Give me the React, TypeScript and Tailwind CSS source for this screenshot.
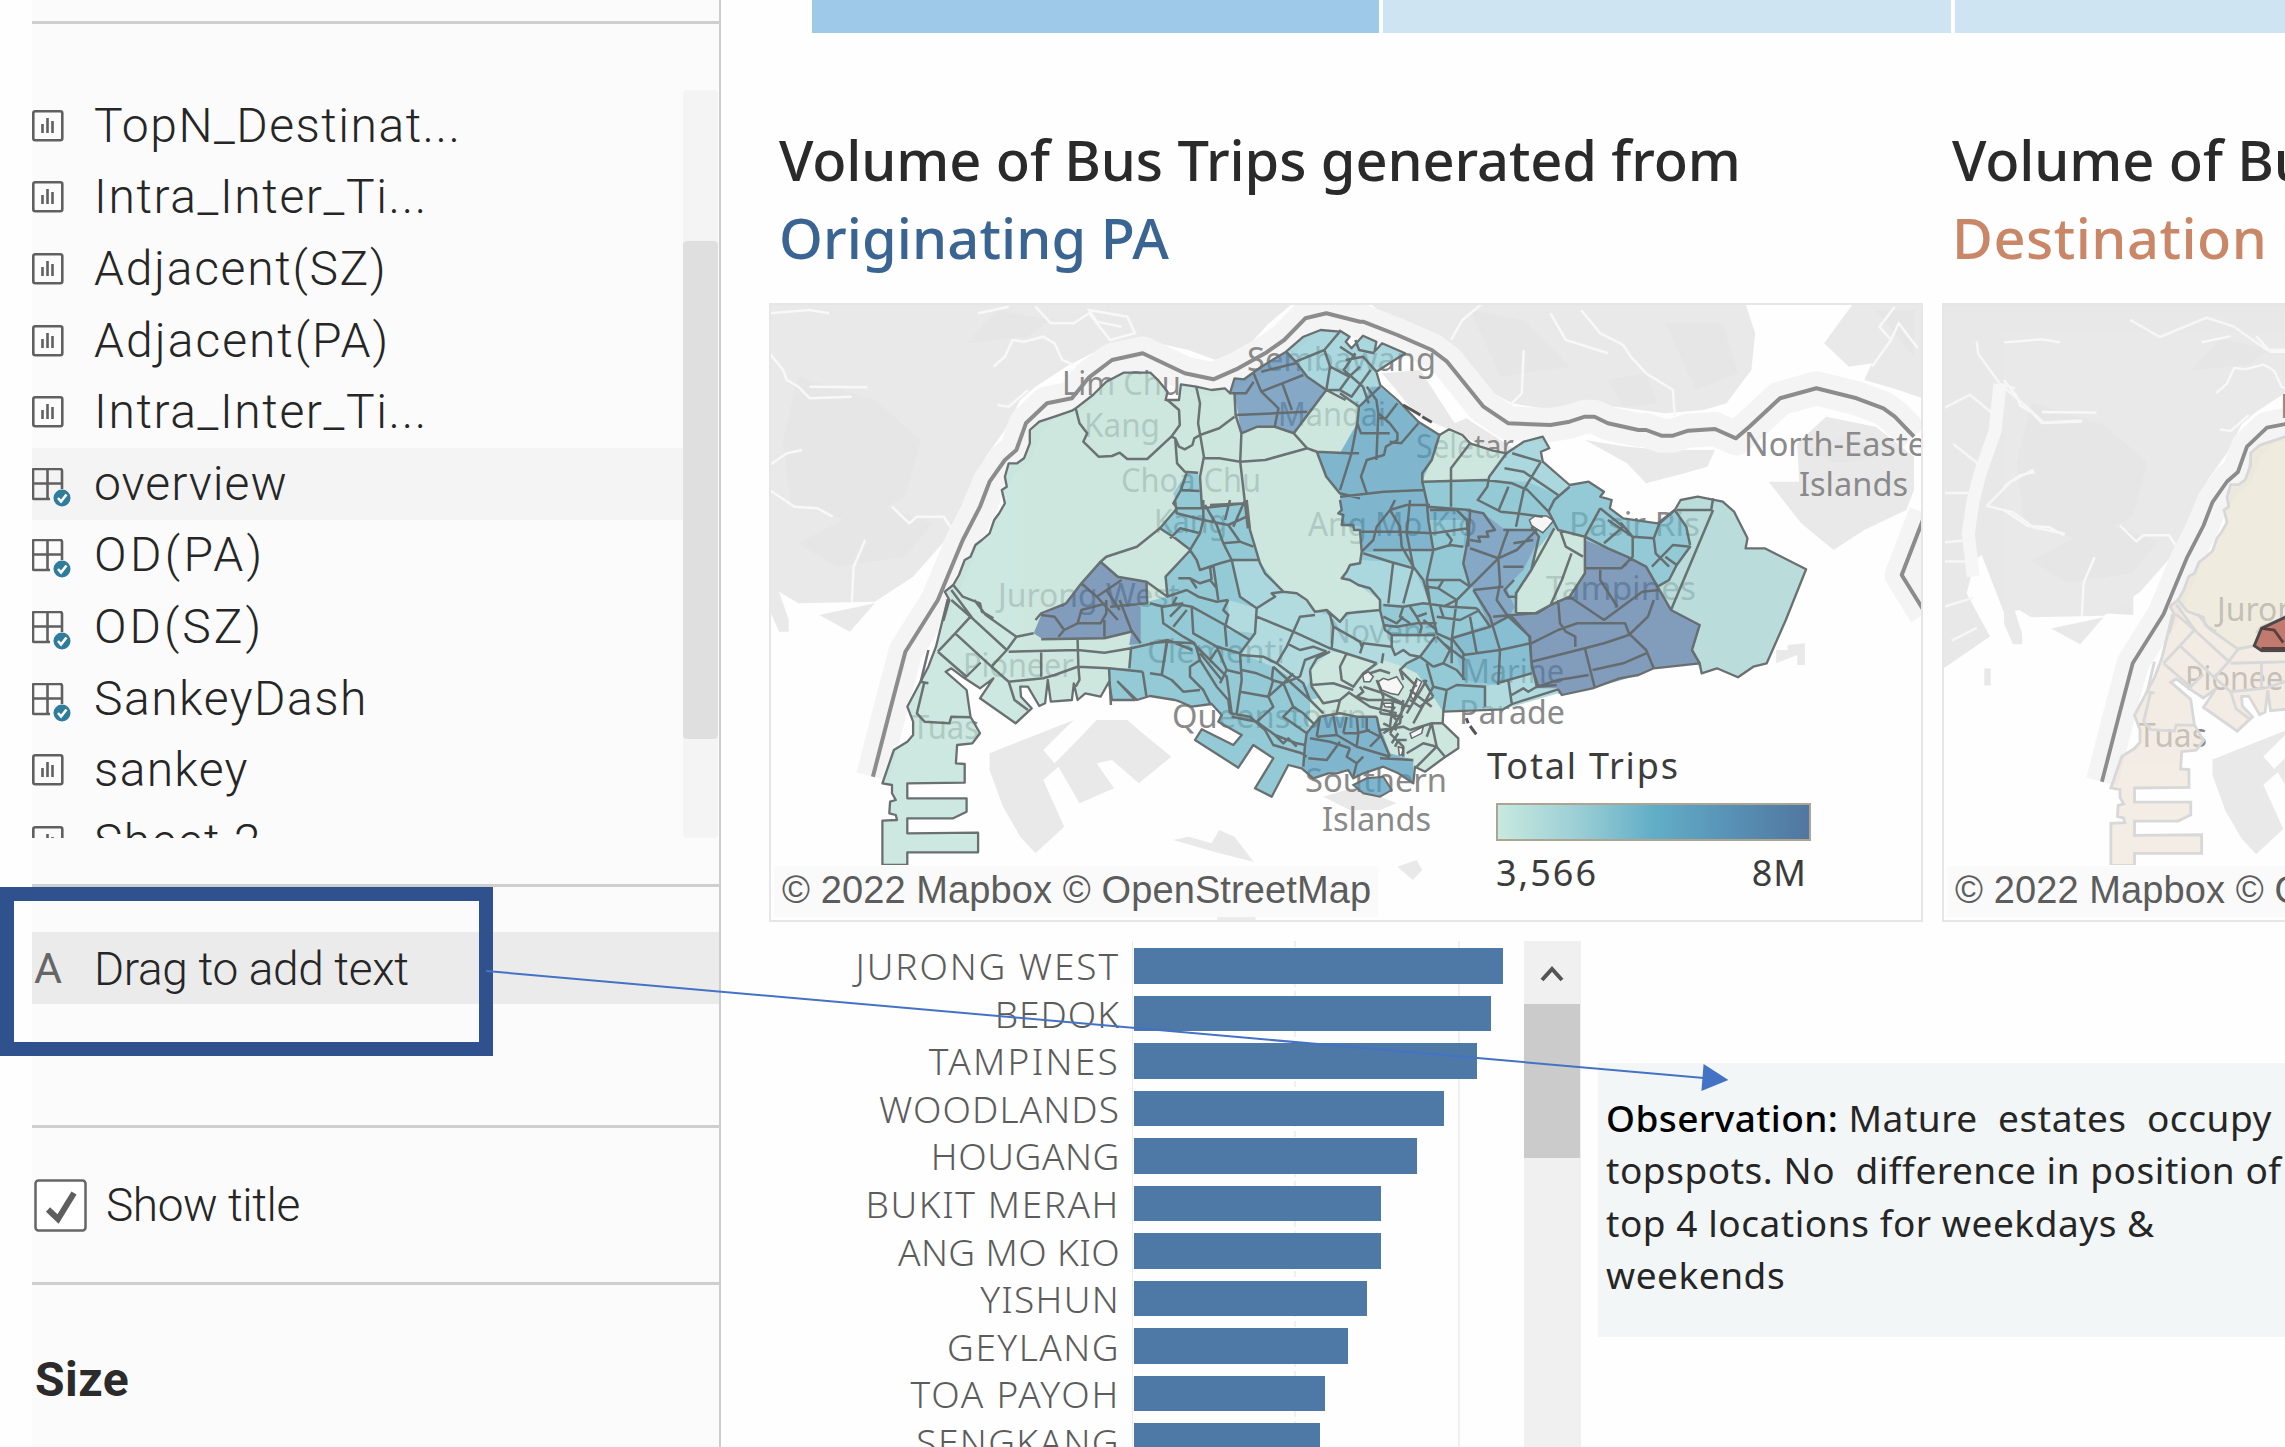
import React from "react";

/* ---------- map geometry ---------- */

type Frame = [number, number, number, number];

// Survey sheets: origin and scale of each set of coordinates.
const SHEETS: Record<string, Frame> = {
  W: [760, 290, 0.38265, 0.33333],
  E: [1340, 290, 0.38265, 0.33333],
  S: [760, 600, 0.38265, 0.33333],
  T: [1340, 600, 0.38265, 0.33333],
  C: [1150, 500, 0.33333, 0.33333],
  M: [1900, 260, 0.33333, 0.42772],
};

function path(src: string, close = false): string {
  return src
    .split(";")
    .map((part) => {
      let d = "";
      part
        .trim()
        .split(/\s+/)
        .forEach((tok) => {
          if (SHEETS[tok]) {
            frame = SHEETS[tok];
            return;
          }
          if (!tok) return;
          const [u, v] = tok.split(",").map(Number);
          d += (d ? "L" : "M") + (frame[0] + u * frame[2]).toFixed(1) + " " + (frame[1] + v * frame[3]).toFixed(1);
        });
      return d + (close && d ? "Z" : "");
    })
    .join("");
}
let frame: Frame = SHEETS.W;

const ISLAND =
  "W 480,990 495,930 483,905 505,885 520,855 535,810 550,800 563,765 580,750 600,730 612,690 625,670 640,640 632,600 645,590 640,560 650,520 672,520 690,505 705,460 705,420 730,395 770,380 815,362 825,355 870,315 905,275 950,248 1020,248 1040,270 1065,305 1060,330 1095,330 1100,283 1140,290 1180,300 1215,295 1228,310 1240,265 1265,268 1310,230 1375,185 1420,140 1465,120 1515,125 E 0,122 25,140 15,155 30,175 60,137 95,155 90,185 110,160 170,190 95,245 105,285 150,330 205,395 260,435 285,418 320,435 340,460 400,482 435,490 480,455 530,440 547,475 525,485 530,515 600,585 650,575 690,605 680,620 710,630 705,655 740,685 830,700 875,660 890,630 935,620 1000,635 1030,665 1065,745 1060,775 1110,775 1218,838 1165,990 T 1115,190 1080,200 1040,232 985,205 945,220 940,190 820,205 780,225 730,235 660,265 580,285 570,268 450,312 C 1060,628 880,635 878,670 925,715 925,745 880,775 825,815 795,800 790,850 745,820 700,800 640,820 610,835 595,810 560,820 535,820 490,835 455,805 415,795 365,890 315,865 370,775 310,735 265,803 135,720 155,688 250,735 275,705 205,665 215,645 185,612 125,620 90,605 75,600 0,588 S 985,300 935,245 980,300 920,300 912,245 890,290 850,280 830,300 820,250 815,300 760,305 752,240 745,310 730,318 700,260 680,260 682,290 710,325 668,370 600,315 575,295 610,235 575,265 535,235 575,190 535,235 500,205 485,215 540,270 550,350 575,400 555,430 515,435 512,490 535,492 535,548 385,550 385,595 540,595 540,635 505,655 385,655 385,700 570,698 570,757 385,757 385,795 320,795 320,662 358,660 355,645 338,640 340,605 355,600 345,580 345,555 320,550 350,450 385,425 400,405 400,365 385,320 440,200 460,140 490,0";

const MINT = "#bce0d5";
const LIGHT = "#8fcad4";
const MID = "#70b7c9";
const BLUE = "#559dbd";
const STEEL = "#5a8bb3";
const DARK = "#577ba6";

const REGIONS: [string, string][] = [
  // central, south and east
  [MID, "W 1115,548 1145,548 1155,655 1265,640 1275,715 C 300,90 330,190 400,275 440,280 495,335 530,330 570,365 590,340 690,330 690,300 625,255 575,235 600,195 630,190 635,155 630,90 575,75 570,0 E 0,490 45,400 50,350 105,290 150,330 205,395 260,435 240,510 215,575 380,570 430,500 480,455 530,440 547,475 525,485 530,515 600,585 650,575 690,605 680,620 710,630 705,655 740,685 830,700 875,660 905,710 915,770 860,870 830,890 865,960 T 940,75 915,150 940,190 820,205 580,285 C 1165,560 1005,560 1005,625 880,635 800,520 640,560 480,600 480,640 460,800 455,805 415,795 365,890 315,865 370,775 310,735 265,803 135,720 155,688 250,735 275,705 205,665 215,645 185,612 125,620 75,600 0,588 S 985,300 935,245 980,300 920,300 912,205 965,205 970,140 W 975,945 1065,920 1060,860 1125,780 1045,715 1090,650 1080,610"],
  ["#a3d2d1", "E 880,655 890,630 935,620 1000,635 1030,665 1065,745 1060,775 1110,775 1218,838 1165,990 T 1115,190 1080,200 1040,232 985,205 945,220 915,150 940,75 865,30 E 865,960 830,890 860,870 915,770 905,710"],
  [LIGHT, "W 1375,185 1420,140 1465,120 1515,125 E 0,122 25,140 15,155 30,175 60,137 95,155 90,185 110,160 170,190 95,245 105,290 50,350 0,310 W 1480,300 1430,260 1400,215"],
  ["#98d0d6", "C 235,300 320,325 375,290 400,275 440,280 495,335 540,345 570,365 620,330 690,330 705,390 725,410 850,410 810,470 750,510 690,490 590,460 540,455 500,500 470,560 370,500 270,460 315,400 235,390"],
  [LIGHT, "C 635,180 720,185 790,200 840,310 700,315 690,300 625,255 575,235 600,200"],
  [LIGHT, "C 250,185 325,180 400,275 375,290 320,325 270,290"],
  [LIGHT, "E 380,570 435,490 480,455 530,440 547,475 525,485 530,515 600,585 570,615 490,575"],
  [MINT, "C 540,455 590,460 680,490 650,520 610,580 560,610 520,610 485,560 480,510"],
  [MINT, "C 560,640 600,580 650,520 700,480 760,500 800,520 850,590 880,640 878,670 925,715 925,745 825,815 745,760 720,760 690,700 670,640"],
  ["#98d0d6", "C 1005,560 1075,540 1145,520 1165,560 1220,555 1225,580 1060,628 1005,625"],
  [BLUE, "E 0,490 45,400 55,350 80,290 105,290 205,395 260,435 240,510 215,560 230,650 340,660 335,770 220,780 60,790 55,710 10,700 W 1525,710 1515,610 1480,560 1455,485 1540,490"],
  [MID, "C 635,155 760,155 850,150 830,240 845,150 835,60 950,60 940,140 935,240 830,240 790,200"],
  [BLUE, "C 470,700 510,650 680,650 720,760 790,780 790,850 745,820 700,800 610,835 595,810 535,820 490,835 455,805"],
  [BLUE, "C 610,855 650,835 700,830 725,870 690,890 640,880"],
  ["#5fa8c2", "C 905,410 1075,350 1140,410 1140,520 1040,555 940,540"],
  [STEEL, "W 1375,185 1400,215 1430,260 1480,300 1395,430 1345,410 1300,410 1258,430 1240,310 1228,310 1240,265 1265,268 1310,230"],
  [STEEL, "C 950,30 1000,40 1060,85 1160,90 1165,120 1120,210 1070,260 1080,290 1095,320 1075,350 1020,380 970,270 940,190 960,110"],
  [DARK, "W 890,815 935,860 1010,875 1015,940 975,940 S 995,20 995,130 965,135 970,95 900,115 735,115 715,100 735,45 800,10"],
  [DARK, "E 640,750 750,800 800,830 830,890 865,960 T 940,75 920,150 940,190 820,205 780,225 660,265 580,285 570,265 515,265 500,180 495,110 445,45 510,40 E 550,945 600,920 640,850"],
  [MINT, "E 560,715 640,740 640,850 600,920 550,945 515,970 460,970 465,910 500,840 515,780"],
  [MINT, "E 260,435 285,418 340,460 435,490 380,570 215,575 240,510"],
];

const HOLES =
  "E 495,690 510,678 540,678 558,692 545,710 530,728 512,715 500,705 ; C 638,525 655,515 670,530 660,545 642,545 ; 685,545 700,535 715,540 740,530 760,560 745,585 720,580 695,570 ; 780,585 800,535 815,545 790,600 ; 780,700 820,680 815,700 785,715 ; 745,740 760,745 755,765 748,765 ; 700,610 725,610 730,622 705,620";

const BOUNDARIES =
  "W 825,355 835,400 855,430 845,455 885,500 920,498 940,488 960,507 1012,507 1075,440 1097,405 1095,360 1065,330;1075,440 1085,445 1095,470 1110,478 1130,465 1135,445 1150,435 1200,415 1240,380;1085,445 1090,520 1110,545 1145,548;1140,290 1150,340 1145,400 1160,500 1150,560 1155,655;1160,505 1200,505 1255,515 1320,510 1430,475;1240,310 1243,375 1258,430 1255,515 1275,715;1258,430 1300,410 1345,410 1395,430 1430,475 1455,485 1480,560 1515,610 1568,625;1395,430 1480,300 1530,330;1455,485 1540,490;1115,548 1100,600 1080,640 1090,655 1045,715 1085,745 1125,780 1060,860 1065,920;1100,600 1148,603;1090,655 1155,655 1265,640;1045,715 985,770 905,800 890,815 935,860 1010,875 1065,920;890,815 840,880 800,940 735,970 720,990;840,880 880,920 935,990;880,920 945,870;905,900 940,960;1010,875 1012,940 915,950;1243,375 1345,370 1430,365;1290,250 1310,305 1365,280 1420,255;1228,310 1270,310 1290,275;1310,305 1355,355 1345,410;1365,280 1390,360;1375,185 1400,215 1430,260 1480,300 1515,300;1400,215 1475,180 1515,125;1475,180 1490,230 1480,300;1490,230 1540,260 1568,230;1515,300 1540,260;1310,245 1400,220;505,885 530,920 575,940 580,965 610,985;500,900 555,985;" +
  "C 290,0 300,90 330,190 345,220 400,275 440,280 470,300 495,335 530,330 570,365 590,340 690,330;570,0 575,30 565,40 580,45 575,75 610,75 612,90 630,90 635,155 630,190 600,195 590,215 575,235 600,240 625,255 660,265 690,300 690,330 705,390 725,405;75,0 80,40 160,60 150,100 90,85 60,115;160,0 160,60 235,75 290,50;150,100 120,150;120,150 140,180 150,210 210,190 245,180 325,180;165,15 200,75 220,130 245,180 270,290 320,325 375,290 365,280 400,275;220,130 270,125 310,140;240,0 225,60;235,75 270,125;285,0 250,80;180,15 290,10;190,195 205,300;120,235 150,250 180,240 200,265;180,200 185,240;50,290 110,270 145,290 200,305 235,300;140,265 120,235 85,235;80,290 70,310 125,320 225,375 300,420;0,310 40,320 100,310;35,320 40,370 100,410 135,430;60,350 100,310;70,380 110,330;235,300 220,330 235,345 225,380 230,440;125,320 130,400 200,440 270,460;320,325 315,400 270,460;320,350 430,395 540,445 680,490;430,395 410,440 380,490 340,470 270,465;430,395 450,350 495,345;410,430 450,450 490,440 530,455;530,330 540,345 550,380 545,445;0,430 50,425 130,430;50,425 35,525 0,520;35,525 65,540 100,575 150,570;150,480 120,500 120,530 160,570 180,610;135,430 150,480 200,560 235,600 240,640;130,430 180,480 230,530 245,640;150,460 215,540;200,440 230,510 270,520;180,480 200,450;230,510 210,550;270,460 275,540 260,640;275,510 320,520 370,540 355,590 270,575;370,500 365,540 400,550 430,620 460,640 490,670;380,490 460,550 480,600 520,640;355,590 400,550 450,530;355,590 370,620 320,665;400,550 430,520;370,500 480,600;430,620 400,650 470,700;240,640 300,650 345,690 370,735 455,760 470,770;245,650 320,665 375,705 440,730 465,735;375,705 400,730 415,715 440,740;470,700 465,735 460,800;470,700 510,650 570,640 620,650 680,650;480,510 485,560 520,610 570,600 600,575;480,510 500,475 540,455;485,555 550,550 610,570;590,460 570,500 575,540 610,560 640,520 680,490;450,530 465,480 530,455;570,600 560,640;500,710 560,705 620,740 720,770;510,650 500,710;550,645 560,705;590,650 580,700;620,650 625,700 620,740;650,650 650,690 690,710;480,715 540,725 600,745;570,725 530,780 475,775;600,745 590,770 620,790 640,770;690,775 790,780;620,790 610,830;680,650 690,700 720,770;660,740 690,710;580,700 620,700 660,690;725,405 855,405;700,315 760,320 820,310 900,320 980,325;725,405 725,440 640,430 630,460;550,380 630,425 635,440;725,440 735,465 760,450 780,465 810,470 855,410;700,460 695,490;735,0 720,30 680,80 670,120 635,155;830,0 835,60 850,150 830,240 840,310 860,400 905,420;720,30 750,80 755,140 790,200 820,240 840,310;780,0 770,100 790,200;635,95 750,95 850,100 955,85;670,150 760,150 850,150 900,135 940,140;640,160 720,185 790,205;730,185 715,310;790,200 760,310;720,30 770,15 840,15;840,30 920,30 950,60 955,110 940,190 960,260;890,100 905,120 895,140;950,30 1000,40 1035,90 1010,95 1015,110 985,110 990,125 960,120;960,145 1045,175 1060,130 1075,90;1045,175 960,260 920,300 880,320;970,270 1060,260;1045,175 1050,250 1040,300 1075,350 1140,410 1145,500;830,240 930,240 960,260;880,240 865,265 920,300;865,265 830,260;920,300 905,420 905,490;970,270 1020,350 1035,400 1050,450;1060,90 1160,90 1100,150 1045,175;1090,130 1150,120;1060,200 1120,200;980,325 1000,350 1020,380;1075,350 1020,380 905,415;960,350 980,460;905,415 940,460 940,540;940,465 1050,450 1140,430;1050,450 1045,555;1040,550 1145,520;700,375 740,380 800,370 860,370;760,320 750,350 780,370;780,320 800,350 830,340;700,350 740,370 760,350;800,350 815,380 810,400;820,360 860,390;860,350 930,360 990,330;870,320 880,350;860,410 900,450 880,490 850,500;880,430 945,480;880,490 920,510 945,540;760,540 750,510 770,490 810,470;750,510 800,560;830,490 850,560 890,570;810,470 850,500;890,570 920,555 1005,560 1005,620;890,570 880,635;1075,540 1085,610;1085,585 1120,565 1135,575 1160,560 1220,555;1145,500 1165,560;640,560 670,570 700,580 760,610;680,540 700,590 690,640;600,580 660,620 740,640;650,600 720,600 780,620;690,640 760,650;730,600 720,680;760,600 750,670 700,700;690,690 760,680 780,690;800,540 780,590 720,700;850,560 790,670;830,540 770,640;780,600 810,620 850,590;720,700 760,740 760,770;780,690 845,670 880,670;845,670 860,740 800,800;770,760 820,730 860,740 885,770;845,670 830,710;725,730 745,700;780,570 845,620;820,540 850,590;660,520 690,510 720,520;630,560 640,575 620,590 655,600;740,660 720,640 735,620;700,670 740,690;735,740 745,720 770,720;" +
  "E 45,400 50,350 105,290;70,290 95,330 100,370 130,400 150,430 150,450 120,470 115,495 70,510 55,560 70,610;0,620 115,605 220,600;100,370 95,510;45,400 55,430 130,430;150,340 120,385 100,385;205,400 160,460 130,455;0,300 30,320 80,240;15,210 60,200 95,245;40,190 10,240 60,290;0,310 50,350;60,290 75,340;0,170 40,200;40,150 50,180 90,190;45,400 30,490 0,600;0,490 50,490;260,435 240,510 215,550 215,575 230,650;215,575 380,570 450,580 490,600 545,665;340,460 290,535 290,650;435,490 390,560 385,590 360,630 420,665 460,670 530,680;430,535 480,545 570,615;525,515 480,600 460,710;440,590 415,660;450,490 525,515;545,665 560,630 600,590;545,665 570,720 640,740 700,775 750,800 800,830 830,890 865,960;230,650 340,660 335,770;640,740 640,835 735,835 765,800 765,740 700,690;680,655 640,740;680,655 740,710 735,700 765,740 820,745 835,700;820,745 825,790 860,830;740,710 690,760;875,660 905,710 915,765;835,700 875,660;815,830 870,765 915,770 880,825 860,870 830,890;850,800 880,825;880,660 970,660 975,625;975,660 865,960;640,835 640,850 600,920 550,945 515,970 460,970;575,720 590,770 635,800;605,790 580,870 550,945;560,715 500,840 460,910 460,970;500,710 520,740 500,840;455,870 430,900 440,920 460,920;680,840 680,870 725,950;690,990 790,905 835,900;600,920 690,990;735,835 750,820;" +
  "T 500,130 570,90 620,70 745,70 755,100 800,150 820,205;570,0 575,70 590,95 615,110 615,140;500,185 640,145 690,130 755,105 805,50 820,0;640,145 665,260;660,210 740,190 800,160;515,260 570,240 650,225;865,30 940,75 920,150 940,190;445,45 495,110 500,185 515,265;400,50 445,45 510,40 550,15;" +
  "S 500,0 550,50 645,150;550,50 510,100 465,155;510,100 605,200;465,155 540,230;645,150 605,200 650,245 740,235 770,225 830,200 912,205 1000,215;560,0 590,45 670,110 645,150;670,110 715,100;650,155 830,150 900,158 970,145;735,150 735,230;830,120 832,200;650,245 665,300 700,330;832,200 835,240 825,260;735,118 900,115 970,95;795,90 830,70 840,30 905,10;830,70 890,70 905,40 905,0;900,60 900,110;795,90 780,110;795,90 770,50 735,45;940,0 970,90 995,130;970,140 965,205;970,145 1065,120 1130,150;1065,120 1050,225;1000,215 1010,290;440,150 420,245 440,250;430,245 410,340 430,365 495,370 500,350 550,352;912,205 917,315";

const LAND = [
  "W 25,42 1390,42 1330,100 1250,200 1190,210 1120,180 1000,150 900,170 800,230 720,290 680,330 640,420 590,500 540,610 500,730 400,860 300,935 100,940 50,905 75,990 S 75,95 50,95 W 25,960",
  "E 80,42 1060,42 1085,130 1075,240 1010,340 950,360 850,370 720,350 600,370 450,340 400,310 350,250 290,160 100,60",
  "E 1340,42 1560,42 1560,340 1460,300 1370,270 1390,220 1330,230 1265,160",
  "E 1120,575 1200,575 1195,460 1270,380 1400,410 1500,500 1500,600 1480,660 1370,720 1290,780 1205,700",
  "E 640,450 750,470 850,480 980,480 960,530 900,550 800,580 750,520",
  "E 110,250 210,240 260,330 300,400 330,385 460,480 430,500 285,418 205,380",
  "S 155,45 300,10 235,95",
  "S 600,460 820,360 740,450 770,490 830,420 880,360 960,360 1000,400 1075,470 990,550 920,480 880,490 925,565 835,610 780,500 740,540 795,680 720,760 680,710 635,620 600,510",
  "S 1080,720 1120,710 1180,730 1200,690 1240,710 1290,785 1200,760",
  "S 1195,950 1295,950 1295,960 1195,960",
  "C 520,890 620,860 740,910 690,930 600,930",
  "T 150,800 200,780 215,810 190,840",
  "T 1140,150 1170,150 1170,135 1215,130 1215,195 1195,195 1195,165 1140,190",
];

const SHADE =
  "W 100,260 300,330 420,450 380,620 250,700 80,640 60,450 ;  620,60 760,90 700,140 540,160 ; 300,640 450,700 380,800 200,830 100,760 ; E 700,270 800,250 830,340 740,350 ; 340,60 480,90 600,230 420,260 ; 850,100 1000,100 1040,250 930,300 ; 1400,60 1500,60 1500,200 ; 1220,480 1340,430 1400,500 1300,520";

const RIVERS =
  "W 25,190 60,240 70,270 100,290 130,325 240,320;130,290 280,292;25,600 90,650 150,655 190,680;25,525 70,490 110,480;610,230 640,200 660,150 690,155 740,140 770,160 790,210 820,225;720,50 760,100 820,100 860,70 915,150 980,130 960,80 860,60 880,95 945,110;345,650 390,700 410,680 480,680 500,715;620,345 650,350 700,300;275,750 245,830 240,935;25,70 130,60 180,70;570,70 650,50;E 550,70 590,150 700,190;630,60 680,130 740,165 760,200 800,250 870,300 875,380;370,42 320,90 290,150;480,180 475,310 440,350;1450,50 1410,110 1440,150 1460,100 1510,175;1440,150 1390,230";

const BORDER =
  "S 295,530 340,330 380,155 465,0 W 490,860 530,750 575,650 600,575 640,510 670,480 695,400 750,340 815,325 860,262 920,210 1000,190 1110,250 1185,268 1250,235 1320,190 1370,150 1425,85 1480,70 1568,95 E 60,95 150,135 240,180 280,215 375,350 440,400 550,405 600,395 640,380 665,380 700,400 780,420 800,420 840,437 870,437 910,422 980,417 1035,445 1070,410 1150,325 1245,295 1350,325 1420,355 1450,380 1500,440;E 1530,670 1468,855 1530,970";

const WEST_LAND = "M 130,100 1155,100 1155,200 700,200 700,830 380,815 345,820 368,890 345,895 300,800 245,690 225,700 200,780 270,880 130,955 ; M 253,955 272,955 272,995 253,995";
const WEST_RIVER = "M 300,290 285,400 240,500 220,560 205,640 220,740";
const WEST_STREAMS = "M 230,190 235,220 300,290 390,350 430,380 545,375;300,290 345,300;135,345 210,315 280,360;160,430 240,480;260,575 330,520 400,490;260,575 340,590 400,625 495,640;135,545 230,545;135,660 200,655;135,705 210,705;135,810 220,790;155,890 230,860;690,140 780,180 920,135 1000,155 1100,210 1155,210";

const LABELS: [string, number, number, number][] = [
  ["Lim Chu", 1062, 395, 119],
  ["Kang", 1084, 437, 76],
  ["Choa Chu", 1121, 492, 140],
  ["Kang", 1154, 533, 73],
  ["Jurong West", 998, 607, 182],
  ["Sembawang", 1247, 371, 189],
  ["Mandai", 1278, 426, 108],
  ["Seletar", 1416, 458, 98],
  ["Ang Mo Kio", 1308, 536, 169],
  ["Pasir Ris", 1569, 536, 131],
  ["Tampines", 1546, 600, 150],
  ["North-Easte", 1744, 456, 182],
  ["Islands", 1799, 496, 109],
  ["Novena", 1327, 643, 113],
  ["Clementi", 1147, 663, 138],
  ["Queenstown", 1172, 728, 195],
  ["Marine", 1462, 683, 102],
  ["Parade", 1459, 724, 106],
  ["Southern", 1305, 792, 142],
  ["Islands", 1322, 831, 109],
  ["Pioneer", 963, 677, 111],
  ["Tuas", 912, 739, 67],
];

const WEST_LABELS: [string, number, number, number][] = [
  ["Lim Chu", 2280, 418, 119],
  ["Jurong West", 2217, 621, 182],
  ["Pioneer", 2185, 690, 111],
  ["Tuas", 2138, 747, 69],
];

function PlaceLabels({ items }: { items: [string, number, number, number][] }) {
  return (
    <g fontFamily="'Noto Sans', 'Open Sans', sans-serif" fontSize="33" fontWeight="400" fill="#8a8a8a">
      {items.map(([t, x, y, w], i) => (
        <text key={i} x={x} y={y} textLength={w} lengthAdjust="spacingAndGlyphs">
          {t}
        </text>
      ))}
    </g>
  );
}

function BaseMap() {
  return (
    <g>
      {LAND.map((d, i) => (
        <path key={i} d={path(d, true)} fill="#e9e9e9" />
      ))}
      <path d={path(SHADE, true)} fill="#e4e4e4" opacity="0.6" />
      <path d={path(RIVERS)} fill="none" stroke="#f8f8f8" strokeWidth="2.5" />
      <path d={path(BORDER)} fill="none" stroke="#f4f4f4" strokeWidth="34" strokeLinejoin="round" />
      <path d={path(BORDER)} fill="none" stroke="#8c8c8c" strokeWidth="4" strokeLinejoin="round" />
    </g>
  );
}

function OriginMap() {
  return (
    <svg className="block h-full w-full" viewBox="769 303 1154 619">
      <BaseMap />
      <PlaceLabels items={LABELS} />
      <g opacity="0.74">
        <path d={path(ISLAND, true)} fill={MINT} />
        {REGIONS.map(([c, d], i) => (
          <path key={i} d={path(d, true)} fill={c} />
        ))}
      </g>
      <path d={path(HOLES, true)} fill="#f6f6f6" stroke="#666b6b" strokeWidth="1.5" />
      <path d={path(BOUNDARIES)} fill="none" stroke="#626868" strokeWidth="2.5" strokeLinejoin="round" opacity="0.92" />
      <path d={path(ISLAND, true)} fill="none" stroke="#6a7070" strokeWidth="2.3" strokeLinejoin="round" />
      <path d={path("C 610,855 650,835 700,830 725,870 690,890 640,880", true)} fill="none" stroke="#6a7070" strokeWidth="2" />
      <path d={path("T 330,355 335,370;340,378 356,403;E 165,345 210,375;215,380 240,397")} fill="none" stroke="#555" strokeWidth="3" />
      <rect x="769" y="865" width="609" height="57" fill="#fefefe" />
      <path d={path("S 1195,950 1295,950 1295,962 1195,962", true)} fill="#ececec" />
    </svg>
  );
}

function DestinationMap() {
  return (
    <svg className="block h-full w-full" viewBox="1942 303 343 619" preserveAspectRatio="xMinYMin slice">
      <path d={path(WEST_LAND, true)} fill="#e8e8e8" />
      <g transform="translate(1274.4 45.4) scale(0.948)">
        <BaseMap />
      </g>
      <path d={path(WEST_RIVER)} fill="none" stroke="#f6f6f6" strokeWidth="13" strokeLinejoin="round" />
      <path d={path(WEST_STREAMS)} fill="none" stroke="#f6f6f6" strokeWidth="2.5" />
      <PlaceLabels items={WEST_LABELS} />
      <g transform="translate(1274.4 45.4) scale(0.948)">
        <g opacity="0.62">
          <path d={path(ISLAND, true)} fill="#ede2d5" />
          <path
            d={path("W 505,885 550,800 600,730 640,640 640,560 690,505 705,420 770,380 825,355 1100,300 1140,700 1045,715 890,815 735,970 S 715,100 670,110 590,45 560,0", true)}
            fill="#e8e1cd"
          />
        </g>
        <path d={path(BOUNDARIES)} fill="none" stroke="#d8d8d8" strokeWidth="3" />
        <path d={path(ISLAND, true)} fill="none" stroke="#d8d8d8" strokeWidth="3" />
        <path
          d={path("W 890,815 935,860 1010,875 1015,940 975,940 S 995,20 995,130 965,135 970,95 900,115 735,115 715,100 735,45 800,10", true)}
          fill="#c07a6f"
          stroke="#4a4a4a"
          strokeWidth="3"
        />
        <path d={path("S 735,108 900,108;735,45 770,50 795,90")} fill="none" stroke="#5a3f3c" strokeWidth="3" />
      </g>
      <rect x="1942" y="865" width="343" height="57" fill="#fefefe" />
    </svg>
  );
}

/* ---------- sidebar ---------- */

function SheetIcon() {
  return (
    <svg className="h-8 w-8 shrink-0" viewBox="0 0 32 32" fill="none" stroke="#606060" strokeWidth="2.600">
      <rect x="1.300" y="1.300" width="29" height="29" rx="2" />
      <path d="M10.500 14v9M15.500 8v15M20.500 11v12" />
    </svg>
  );
}

function DashboardIcon() {
  return (
    <svg className="h-10 w-10 shrink-0" viewBox="0 0 40 40" fill="none" stroke="#606060" strokeWidth="2.600">
      <path d="M30 21V3a2 2 0 0 0-2-2H2a1 1 0 0 0-1 1v28a1 1 0 0 0 1 1h16M15.500 1v30M1 15.500h29" />
      <circle cx="30" cy="30" r="8.500" fill="#2f7c9b" stroke="none" />
      <path d="m26 30 3 3.500 5.500-7" stroke="#fff" />
    </svg>
  );
}

const SHEET_LIST: [string, "sheet" | "dash", string][] = [
  ["TopN_Destinat...", "sheet", "tracking-[1.5px]"],
  ["Intra_Inter_Ti...", "sheet", "tracking-[1.6px]"],
  ["Adjacent(SZ)", "sheet", "tracking-[1.7px]"],
  ["Adjacent(PA)", "sheet", "tracking-[2px]"],
  ["Intra_Inter_Ti...", "sheet", "tracking-[1.6px]"],
  ["overview", "dash", "tracking-[1px]"],
  ["OD(PA)", "dash", "tracking-[3.4px]"],
  ["OD(SZ)", "dash", "tracking-[3px]"],
  ["SankeyDash", "dash", "tracking-[1.5px]"],
  ["sankey", "sheet", "tracking-[1.3px]"],
  ["Sheet 2", "sheet", "tracking-[1.4px]"],
];

function Sidebar() {
  return (
    <aside className="ml-8 flex w-[689px] shrink-0 flex-col border-r-2 border-[#cdcdcd] bg-[#fbfbfb] font-['Roboto','Inter',sans-serif] text-[48px] leading-none font-light text-[#262626]">
      <div className="h-[24px] shrink-0 border-b-3 border-[#cfcfcf]" />
      <div className="mt-[66px] flex h-[748px] shrink-0 overflow-hidden">
        <ul className="w-[651px]">
          {SHEET_LIST.map(([name, kind, tracking], i) => (
            <li key={i} className={i === 5 ? "flex h-[71.6px] items-center bg-[#f4f4f4]" : "flex h-[71.6px] items-center"}>
              <span className="flex w-[62px] shrink-0 items-center">
                {kind === "sheet" ? <SheetIcon /> : <span className="mt-2 flex"><DashboardIcon /></span>}
              </span>
              <span className={`whitespace-nowrap ${tracking}`}>{name}</span>
            </li>
          ))}
        </ul>
        <div className="h-[748px] w-[35px] rounded-sm bg-[#f4f4f4] pt-[151px]">
          <div className="h-[498px] rounded-sm bg-[#dfdfdf]" />
        </div>
      </div>
      <div className="mt-[46px] h-[3px] shrink-0 bg-[#cfcfcf]" />
      <div className="mt-[45px] flex h-[72px] shrink-0 items-center bg-[#ebebeb]">
        <span className="w-[62px] pl-0.5 text-[43px] font-normal text-[#666]">A</span>
        <span className="pt-0.5 text-[46px] tracking-[-0.35px]">Drag to add text</span>
      </div>
      <div className="mt-[121px] h-[3px] shrink-0 bg-[#cfcfcf]" />
      <div className="flex h-[154px] shrink-0 items-center gap-[19px] pl-0.5">
        <svg className="h-[53px] w-[53px]" viewBox="0 0 53 53">
          <rect x="1.500" y="1.500" width="50" height="50" rx="3" fill="#fff" stroke="#666" strokeWidth="2.500" />
          <path d="M14 30.500 24 40 40 14" fill="none" stroke="#5e5e5e" strokeWidth="6" />
        </svg>
        <span className="text-[46px] tracking-[-0.45px]">Show title</span>
      </div>
      <div className="h-[3px] shrink-0 bg-[#cfcfcf]" />
      <div className="mt-[71px] pl-[3px] font-bold tracking-[0.5px] text-[#2b2b2b]">Size</div>
    </aside>
  );
}

/* ---------- dashboard ---------- */

const AREAS: [string, number, string][] = [
  ["JURONG WEST", 369, "tracking-[1.9px]"],
  ["BEDOK", 357, "tracking-[1px]"],
  ["TAMPINES", 343, "tracking-[2.3px]"],
  ["WOODLANDS", 310, "tracking-[1.1px]"],
  ["HOUGANG", 283, "tracking-[0.6px]"],
  ["BUKIT MERAH", 247, "tracking-[1.6px]"],
  ["ANG MO KIO", 247, "tracking-[0.4px]"],
  ["YISHUN", 233, "tracking-[1.3px]"],
  ["GEYLANG", 214, "tracking-[1.5px]"],
  ["TOA PAYOH", 191, "tracking-[1.8px]"],
  ["SENGKANG", 186, "tracking-[1.4px]"],
];

function BarChart() {
  return (
    <div className="relative h-[506px] w-[755px] overflow-hidden">
      <div className="absolute inset-y-0 left-[363px] w-px bg-[#ececec]" />
      <div className="absolute inset-y-0 left-[525px] w-0 border-l-2 border-dashed border-[#f0f0f0]" />
      <div className="absolute inset-y-0 left-[689px] w-0.5 bg-[#f0f0f0]" />
      <div className="relative pt-px">
        {AREAS.map(([name, w, tracking]) => (
          <div key={name} className="flex h-[47.550px] items-center">
            <span className={`flex w-[351px] justify-end text-[37px] leading-none font-light whitespace-nowrap text-[#5c5c5c] ${tracking}`}>{name}</span>
            <span className="ml-[14px] h-[35.500px] bg-[#4e79a7]" style={{ width: w }} />
          </div>
        ))}
      </div>
    </div>
  );
}

function Attribution({ text }: { text: string }) {
  return (
    <div className="absolute bottom-[5px] left-[5px] flex h-[51px] w-[604px] items-center overflow-hidden bg-[#fafafa] pb-[3px] pl-2 font-['Liberation_Sans',sans-serif] text-[38px] leading-none tracking-[0.1px] whitespace-nowrap text-[#5c5c5c]">
      {text}
    </div>
  );
}

export default function App() {
  return (
    <div className="relative flex h-[1447px] w-[2285px] overflow-hidden bg-[#fefefe] font-['Noto_Sans','Open_Sans',sans-serif]">
      <Sidebar />
      <main className="flex w-[1564px] shrink-0 flex-col overflow-hidden pl-[48px]">
        <div className="flex h-[33px] shrink-0 gap-1 pl-[43px]">
          <div className="w-[567px] shrink-0 bg-[#9fc9e9]" />
          <div className="w-[568px] shrink-0 bg-[#cfe4f2]" />
          <div className="w-[567px] shrink-0 bg-[#cfe4f2]" />
        </div>

        <div className="mt-[87px] flex h-[183px] shrink-0 text-[56px] leading-[78px] font-medium tracking-[-0.1px] whitespace-nowrap text-[#2a2a2a]">
          <h2 className="w-[1173px] shrink-0 pl-[10px]">
            Volume of Bus Trips generated from
            <br />
            <span className="tracking-[0.1px] text-[#3a6592]">Originating PA</span>
          </h2>
          <h2 className="shrink-0 pl-[10px]">
            Volume of Bus Trips generated to
            <br />
            <span className="tracking-[0.5px] text-[#ca8768]">Destination PA</span>
          </h2>
        </div>

        <div className="flex h-[619px] shrink-0 gap-[19px]">
          <section className="relative w-[1154px] shrink-0 overflow-hidden">
            <OriginMap />
            <Attribution text="© 2022 Mapbox © OpenStreetMap" />
            <div className="absolute top-[438px] left-[718px] w-[330px] text-[36px] leading-[50px] text-[#3c3c3c]">
              <div className="tracking-[1.8px]">Total Trips</div>
              <div className="mt-3 ml-[9px] h-[38px] w-[315px] border-2 border-[#ada593] bg-[linear-gradient(90deg,#c8e9df,#9ccfd5_25%,#62aec7_50%,#5891b5_75%,#51769f)]" />
              <div className="mt-[7px] flex w-[320px] justify-between pl-[9px]">
                <span className="tracking-[2px]">3,566</span>
                <span className="tracking-[1px]">8M</span>
              </div>
            </div>
            <div className="pointer-events-none absolute inset-0 border-2 border-[#e6e6e6]" />
          </section>
          <section className="relative w-[343px] shrink-0 overflow-hidden">
            <DestinationMap />
            <Attribution text="© 2022 Mapbox © OpenStreetMap" />
            <div className="pointer-events-none absolute inset-0 border-2 border-r-0 border-[#e6e6e6]" />
          </section>
        </div>

        <div className="mt-[19px] flex h-[506px] shrink-0">
          <BarChart />
          <div className="flex w-[57px] shrink-0 flex-col bg-[#f0f0f0]">
            <div className="flex h-[63px] items-center justify-center pr-[2px]">
              <svg className="h-[18px] w-6" viewBox="0 0 24 18">
                <path d="M2 16 12 5l10 11" fill="none" stroke="#555" strokeWidth="4" />
              </svg>
            </div>
            <div className="h-[154px] w-14 bg-[#cbcbcb]" />
          </div>
          <div className="mt-[122px] ml-[17px] h-[274px] w-[687px] shrink-0 bg-[#f2f6f7] pt-[29px] pl-[8px] text-[37px] leading-[52.400px] font-normal tracking-[0.55px] whitespace-pre text-[#262626]">
            <p><span className="font-medium tracking-[0.4px] text-black">Observation:</span> Mature  estates  occupy</p>
            <p>topspots. No  difference in position of</p>
            <p>top 4 locations for weekdays &amp;</p>
            <p>weekends</p>
          </div>
        </div>
      </main>

      <div className="absolute top-[887px] left-0 h-[169px] w-[493px] border-14 border-[#2f528f]" />
      <svg className="absolute top-[960px] left-[480px] h-[140px] w-[1260px]" viewBox="480 960 1260 140">
        <path d="M486 971 1704 1078" stroke="#4472c4" strokeWidth="2" />
        <path d="M1703.600 1064 1728.400 1080 1701.400 1091z" fill="#4472c4" />
      </svg>
    </div>
  );
}
